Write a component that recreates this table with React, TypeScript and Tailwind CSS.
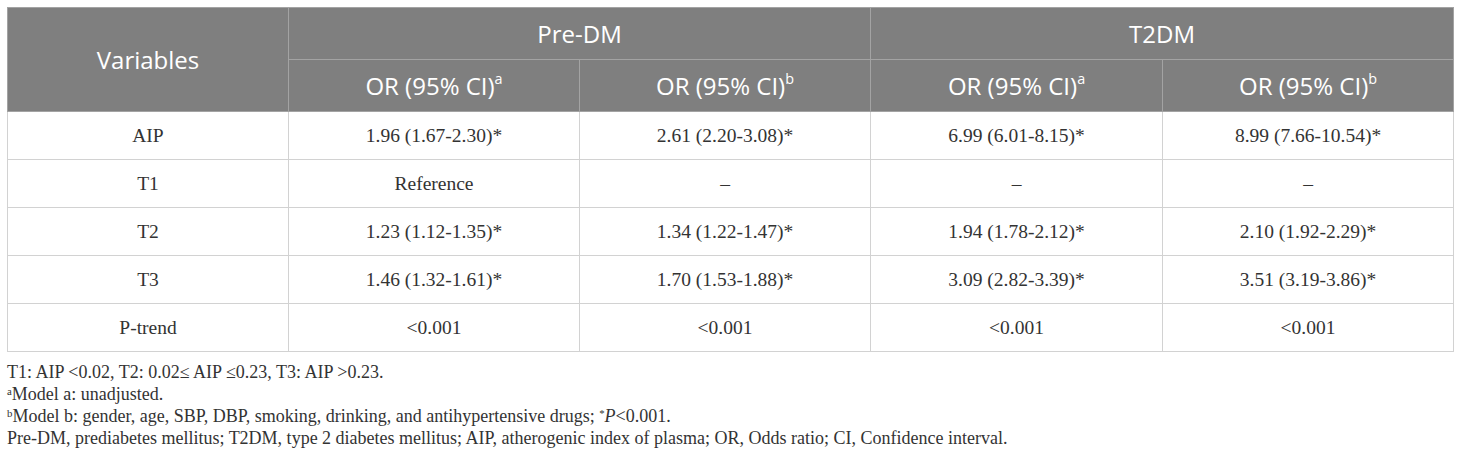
const rows = [
  { name: 'AIP', cells: ['1.96 (1.67-2.30)*', '2.61 (2.20-3.08)*', '6.99 (6.01-8.15)*', '8.99 (7.66-10.54)*'] },
  { name: 'T1', cells: ['Reference', '–', '–', '–'] },
  { name: 'T2', cells: ['1.23 (1.12-1.35)*', '1.34 (1.22-1.47)*', '1.94 (1.78-2.12)*', '2.10 (1.92-2.29)*'] },
  { name: 'T3', cells: ['1.46 (1.32-1.61)*', '1.70 (1.53-1.88)*', '3.09 (2.82-3.39)*', '3.51 (3.19-3.86)*'] },
  { name: 'P-trend', cells: ['<0.001', '<0.001', '<0.001', '<0.001'] },
];

const serif = "font-['Liberation_Serif',_'Times_New_Roman',_serif]";

const Sup = ({ children }: { children: string }) => (
  <sup className="relative -top-[2px] text-[0.6em] align-super leading-none">{children}</sup>
);

const App = () => (
  <div className="min-h-[464px] w-[1460px] bg-white pl-[7px] pt-[7px]">
    <table className="w-[1446px] table-fixed border-collapse border border-[#cfcfcf]">
      <colgroup>
        <col className="w-[281px]" />
        <col className="w-[291px]" />
        <col className="w-[291px]" />
        <col className="w-[292px]" />
        <col className="w-[291px]" />
      </colgroup>
      <thead className="bg-[#7f7f7f] font-['Open_Sans',_'Lato',_sans-serif] text-[24px] text-white">
        <tr className="h-[52px]">
          <th rowSpan={2} className="border border-[#a3a3a3] font-normal">Variables</th>
          <th colSpan={2} className="border border-[#a3a3a3] font-normal">Pre-DM</th>
          <th colSpan={2} className="border border-[#a3a3a3] font-normal">T2DM</th>
        </tr>
        <tr className="h-[52px]">
          <th className="border border-[#a3a3a3] font-normal">OR (95% CI)<Sup>a</Sup></th>
          <th className="border border-[#a3a3a3] font-normal">OR (95% CI)<Sup>b</Sup></th>
          <th className="border border-[#a3a3a3] font-normal">OR (95% CI)<Sup>a</Sup></th>
          <th className="border border-[#a3a3a3] font-normal">OR (95% CI)<Sup>b</Sup></th>
        </tr>
      </thead>
      <tbody className={`${serif} text-[19.5px] text-[#333333]`}>
        {rows.map((row) => (
          <tr key={row.name} className="h-[48px]">
            <td className="border border-[#d2d2d2] text-center">{row.name}</td>
            {row.cells.map((c, i) => (
              <td key={i} className="border border-[#d2d2d2] text-center">{c}</td>
            ))}
          </tr>
        ))}
      </tbody>
    </table>
    <div className={`${serif} mt-[9px] text-[18px] leading-[22px] text-[#333333]`}>
      <p>T1: AIP &lt;0.02, T2: 0.02≤ AIP ≤0.23, T3: AIP &gt;0.23.</p>
      <p><sup className="text-[0.6em]">a</sup>Model a: unadjusted.</p>
      <p>
        <sup className="text-[0.6em]">b</sup>Model b: gender, age, SBP, DBP, smoking, drinking, and antihypertensive drugs;{' '}
        <sup className="text-[0.6em]">*</sup><i>P</i>&lt;0.001.
      </p>
      <p>Pre-DM, prediabetes mellitus; T2DM, type 2 diabetes mellitus; AIP, atherogenic index of plasma; OR, Odds ratio; CI, Confidence interval.</p>
    </div>
  </div>
);

export default App;
